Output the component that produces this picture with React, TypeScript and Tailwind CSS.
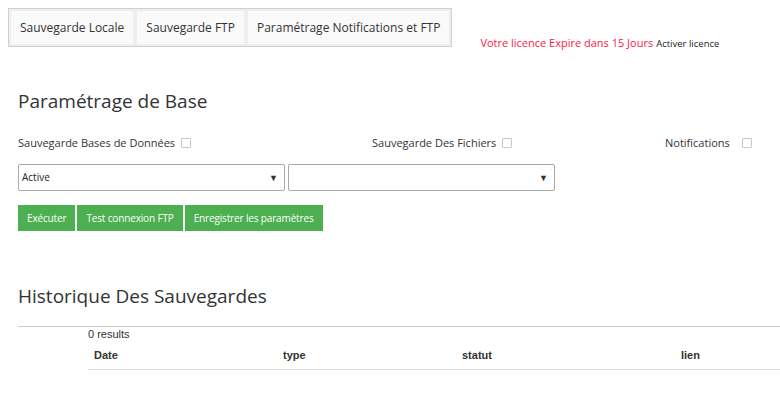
const tabs = ["Sauvegarde Locale", "Sauvegarde FTP", "Paramétrage Notifications et FTP"];

const Check = () => (
  <span className="inline-block w-[10px] h-[10px] border border-[#c8c8c8] bg-white rounded-[1px]" />
);

const Select = ({ value }: { value?: string }) => (
  <div className="w-[267px] h-[27px] border border-[#a9a9a9] rounded-[2px] flex items-center justify-between pl-[3px] pr-[6px] text-[10px] text-[#222]">
    <span>{value}</span>
    <span className="text-[9px] text-[#333]">▼</span>
  </div>
);

export default function App() {
  return (
    <div className="w-[780px] h-[406px] bg-white overflow-hidden text-[#333] font-['Open_Sans',sans-serif]">
      {/* top tabs + licence */}
      <div className="flex items-end pt-2 pl-2">
        <div className="flex gap-1 p-[2px] border border-[#cfcfcf] bg-[#eeeeee] h-[39px]">
          {tabs.map((t) => (
            <div key={t} className="bg-[#fafafa] px-[9px] flex items-center text-[12px] text-[#333]">
              {t}
            </div>
          ))}
        </div>
        <div className="ml-[28px] mb-[-4px] flex items-baseline gap-[3px]">
          <span className="text-[11px] text-[#ff1744]">Votre licence Expire dans 15 Jours</span>
          <span className="text-[9.5px] text-[#222]">Activer licence</span>
        </div>
      </div>

      {/* paramétrage */}
      <div className="px-[18px]">
        <h2 className="text-[19px] leading-[28px] text-[#333] mt-[40px]">Paramétrage de Base</h2>
        <div className="flex items-center mt-[20px] text-[11px] h-[16px]">
          <div className="w-[354px] flex items-center gap-[6px]">
            Sauvegarde Bases de Données <Check />
          </div>
          <div className="w-[293px] flex items-center gap-[6px]">
            Sauvegarde Des Fichiers <Check />
          </div>
          <div className="flex items-center gap-[12px]">
            Notifications <Check />
          </div>
        </div>
        <div className="flex gap-[3px] mt-[13px]">
          <Select value="Active" />
          <Select />
        </div>
        <div className="flex gap-[2px] mt-[14px]">
          {["Exécuter", "Test connexion FTP", "Enregistrer les paramètres"].map((b) => (
            <button key={b} className="h-[26px] px-[9px] bg-[#4caf50] text-white text-[10px] tracking-[-0.15px]">
              {b}
            </button>
          ))}
        </div>
        <h2 className="text-[19px] leading-[28px] text-[#333] mt-[51px]">Historique Des Sauvegardes</h2>
      </div>

      {/* historique */}
      <div className="ml-[18px] mt-[16px] border-t border-[#cccccc] font-['Liberation_Sans',Arial,sans-serif]">
        <div className="ml-[70px]">
          <div className="text-[11px] text-[#333] leading-[14px]">0 results</div>
          <div className="flex text-[11px] font-bold text-[#333] h-[29px] items-center border-b border-[#dddddd]">
            <div className="w-[189px] pl-[6px]">Date</div>
            <div className="w-[179px] pl-[6px]">type</div>
            <div className="w-[219px] pl-[6px]">statut</div>
            <div className="pl-[6px]">lien</div>
          </div>
        </div>
      </div>
    </div>
  );
}
